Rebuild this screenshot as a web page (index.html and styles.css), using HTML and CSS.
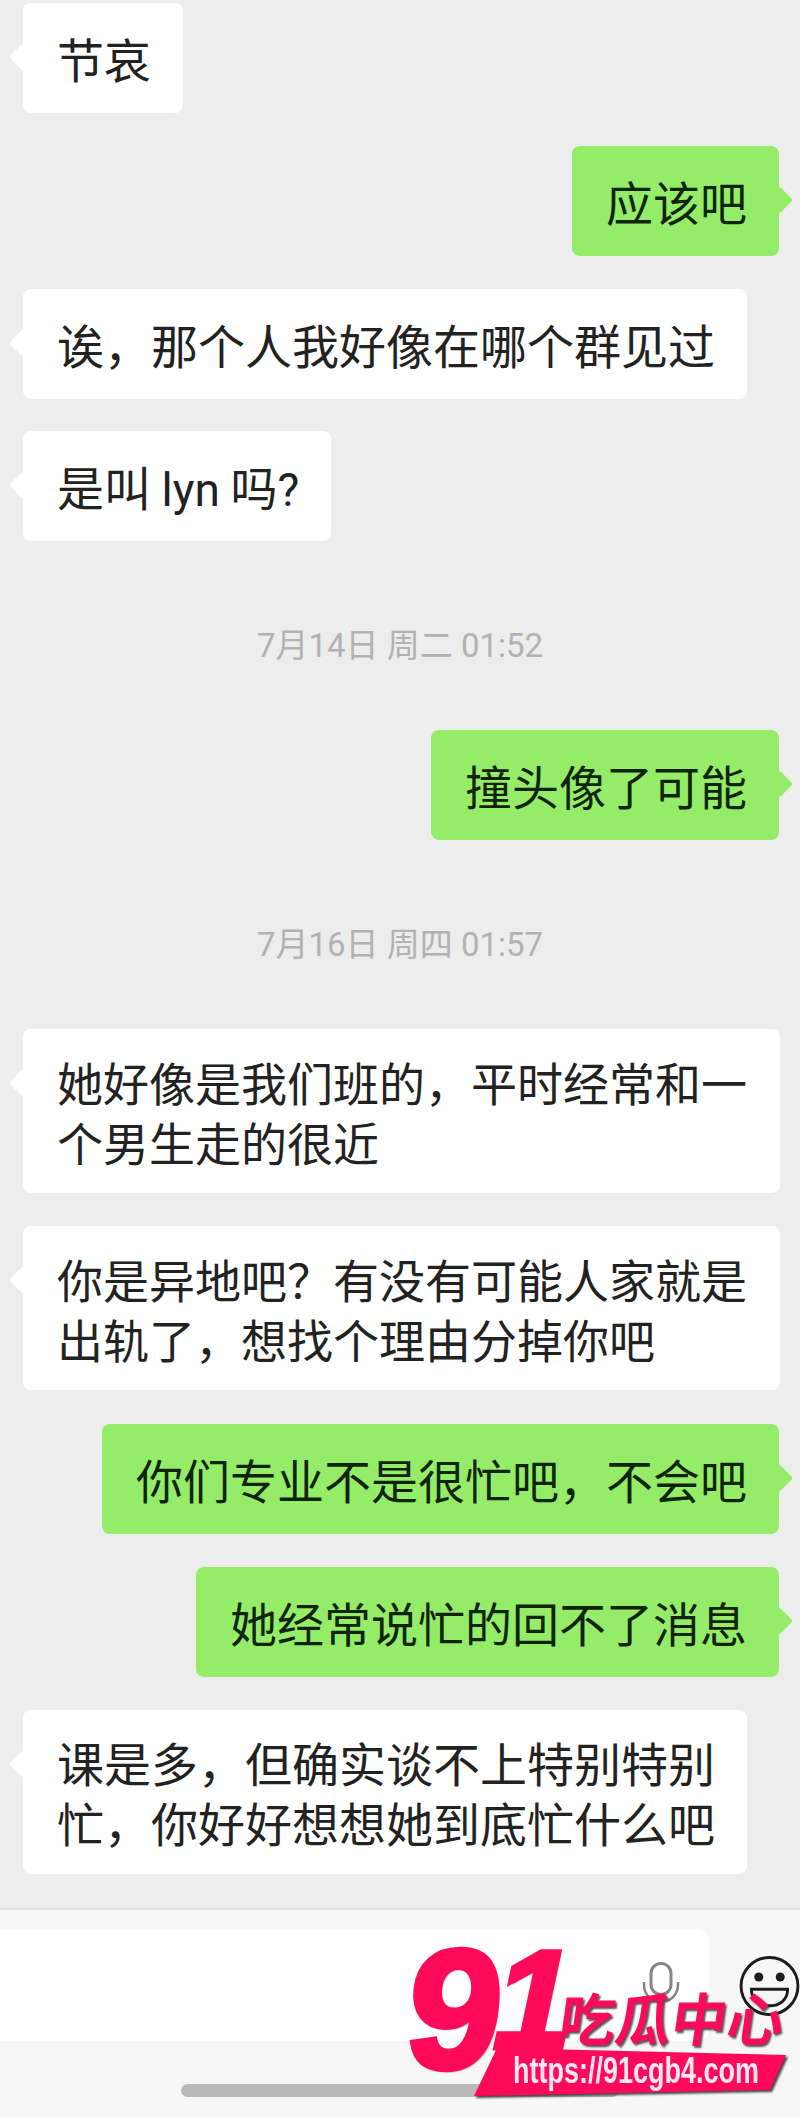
FILE: index.html
```html
<!DOCTYPE html>
<html lang="zh-CN">
<head>
<meta charset="utf-8">
<title>聊天</title>
<link rel="stylesheet" href="styles.css">
</head>
<body>
<main class="chat">
  <div class="msg in"><div class="bubble">节哀</div></div>
  <div class="msg out"><div class="bubble">应该吧</div></div>
  <div class="msg in"><div class="bubble">诶，那个人我好像在哪个群见过</div></div>
  <div class="msg in tight"><div class="bubble">是叫 <span class="latin">lyn</span> 吗<span class="latin">?</span></div></div>
  <div class="time">7月14日 周二 01:52</div>
  <div class="msg out"><div class="bubble">撞头像了可能</div></div>
  <div class="time">7月16日 周四 01:57</div>
  <div class="msg in"><div class="bubble two wide"><span class="line">她好像是我们班的，平时经常和一</span><span class="line">个男生走的很近</span></div></div>
  <div class="msg in"><div class="bubble two wide"><span class="line">你是异地吧？有没有可能人家就是</span><span class="line">出轨了，想找个理由分掉你吧</span></div></div>
  <div class="msg out loose"><div class="bubble">你们专业不是很忙吧，不会吧</div></div>
  <div class="msg out"><div class="bubble">她经常说忙的回不了消息</div></div>
  <div class="msg in"><div class="bubble two"><span class="line">课是多，但确实谈不上特别特别</span><span class="line">忙，你好好想想她到底忙什么吧</span></div></div>
</main>
<footer class="bar">
  <div class="composer">
    <div class="input">
      <svg class="mic" viewBox="0 0 38 42" width="38" height="42" aria-hidden="true">
        <rect x="9" y="1.5" width="20" height="31" rx="10" fill="none" stroke="#858585" stroke-width="3"/>
        <path d="M2 20v3a17 17 0 0 0 34 0v-3" fill="none" stroke="#858585" stroke-width="2.5"/>
      </svg>
    </div>
    <svg class="smile" viewBox="0 0 74 74" width="74" height="74" aria-hidden="true">
      <circle cx="37" cy="37" r="34.5" fill="none" stroke="#1c1c1c" stroke-width="3.5"/>
      <circle cx="24" cy="26" r="5.5" fill="#1c1c1c"/>
      <circle cx="50" cy="26" r="5.5" fill="#1c1c1c"/>
      <path d="M15 41h44c0 13-10 20-22 20s-22-7-22-20z" fill="none" stroke="#1c1c1c" stroke-width="3.5"/>
    </svg>
  </div>
  <div class="home"></div>
</footer>
<aside class="logo">
  <span class="nine">9</span>
  <span class="one">1</span>
  <span class="cn">吃瓜中心</span>
  <div class="ribbon-wrap">
    <div class="ribbon"><span class="url">https://91cgb4.com</span></div>
  </div>
</aside>
</body>
</html>
```
FILE: styles.css
```css
* { box-sizing: border-box; }
html, body { margin: 0; padding: 0; }
body {
  width: 800px;
  height: 2118px;
  overflow: hidden;
  position: relative;
  background: #ededed;
  font-family: "Noto Sans CJK SC", "Noto Sans", sans-serif;
  color: #222;
}
.chat {
  height: 1908px;
  padding: 3px 0 0;
  display: flex;
  flex-direction: column;
  gap: 33px;
}
.msg { display: flex; padding: 0 20px 0 23px; }
.msg.out { justify-content: flex-end; padding-right: 21px; }
.msg.tight { margin-top: -1px; }
.msg.loose { margin-top: 1px; }
.bubble {
  position: relative;
  flex: none;
  padding: 25px 32px 25px 34px;
  background: #fff;
  border-radius: 8px;
  font-size: 47px;
  line-height: 60px;
  white-space: nowrap;
}
.latin {
  font-family: Roboto, "Noto Sans", sans-serif;
  font-weight: 400;
  line-height: 1;
}
.bubble .latin { font-size: 46px; }
.line { display: block; height: 60px; }
.two { padding-top: 22px; padding-bottom: 22px; }
.wide { width: 757px; font-size: 46px; }
.bubble::before {
  content: "";
  position: absolute;
  top: 44px;
  left: -10px;
  width: 20px;
  height: 20px;
  background: inherit;
  border-radius: 3px;
  transform: rotate(45deg);
}
.out .bubble { background: #95ec69; color: #10240a; }
.out .bubble::before { left: auto; right: -10px; }
.time {
  height: 123px;
  padding-top: 14px;
  display: flex;
  align-items: center;
  justify-content: center;
  font-family: Roboto, "Noto Sans CJK SC", sans-serif;
  font-size: 33px;
  color: #b2b2b2;
}
.bar {
  height: 210px;
  background: #f7f7f7;
  border-top: 2px solid #e0e0e0;
  padding-top: 20px;
}
.composer { display: flex; align-items: center; gap: 30px; }
.input {
  flex: none;
  width: 709px;
  height: 111px;
  background: #fff;
  border-radius: 0 12px 12px 0;
  display: flex;
  align-items: flex-start;
  justify-content: flex-end;
  padding: 32px 29px 0 0;
}
.home {
  width: 438px;
  height: 13px;
  margin: 43px 0 0 181px;
  background: #b9b9b9;
  border-radius: 7px;
}
.logo {
  position: absolute;
  left: 0;
  top: 0;
  width: 800px;
  height: 2118px;
  color: #ff0a5a;
  pointer-events: none;
}
.nine, .one, .cn, .ribbon-wrap { position: absolute; }
.nine, .one {
  font-family: "Liberation Sans", Arial, sans-serif;
  font-weight: 700;
  line-height: 1;
  text-shadow: 2px 2px 2px #555;
  -webkit-text-stroke: 5px #ff0a5a;
}
.nine {
  left: 408px;
  top: 1924px;
  font-size: 170px;
  transform: skewX(-6deg);
}
.one {
  left: 497px;
  top: 1930px;
  font-size: 140px;
  transform: skewX(-12deg);
}
.cn {
  left: 555px;
  top: 1976px;
  font-size: 57px;
  line-height: 80px;
  font-weight: 700;
  white-space: nowrap;
  text-shadow: 2px 2px 2px #555;
  transform: skewX(-8deg) scaleX(.98);
  transform-origin: left bottom;
}
.ribbon-wrap {
  left: 474px;
  top: 2048px;
  width: 312px;
  height: 48px;
  filter: drop-shadow(2px 2px 1px #444);
}
.ribbon {
  width: 100%;
  height: 100%;
  background: #ff0a5a;
  clip-path: polygon(23px 0, 100% 7px, 296px 42px, 0 100%);
}
.url {
  position: absolute;
  left: 39px;
  top: 3px;
  font-family: "Liberation Sans", Arial, sans-serif;
  font-weight: 700;
  font-size: 37px;
  line-height: 40px;
  color: #ffe6ef;
  white-space: nowrap;
  transform: scaleX(.73);
  transform-origin: left center;
}
```
